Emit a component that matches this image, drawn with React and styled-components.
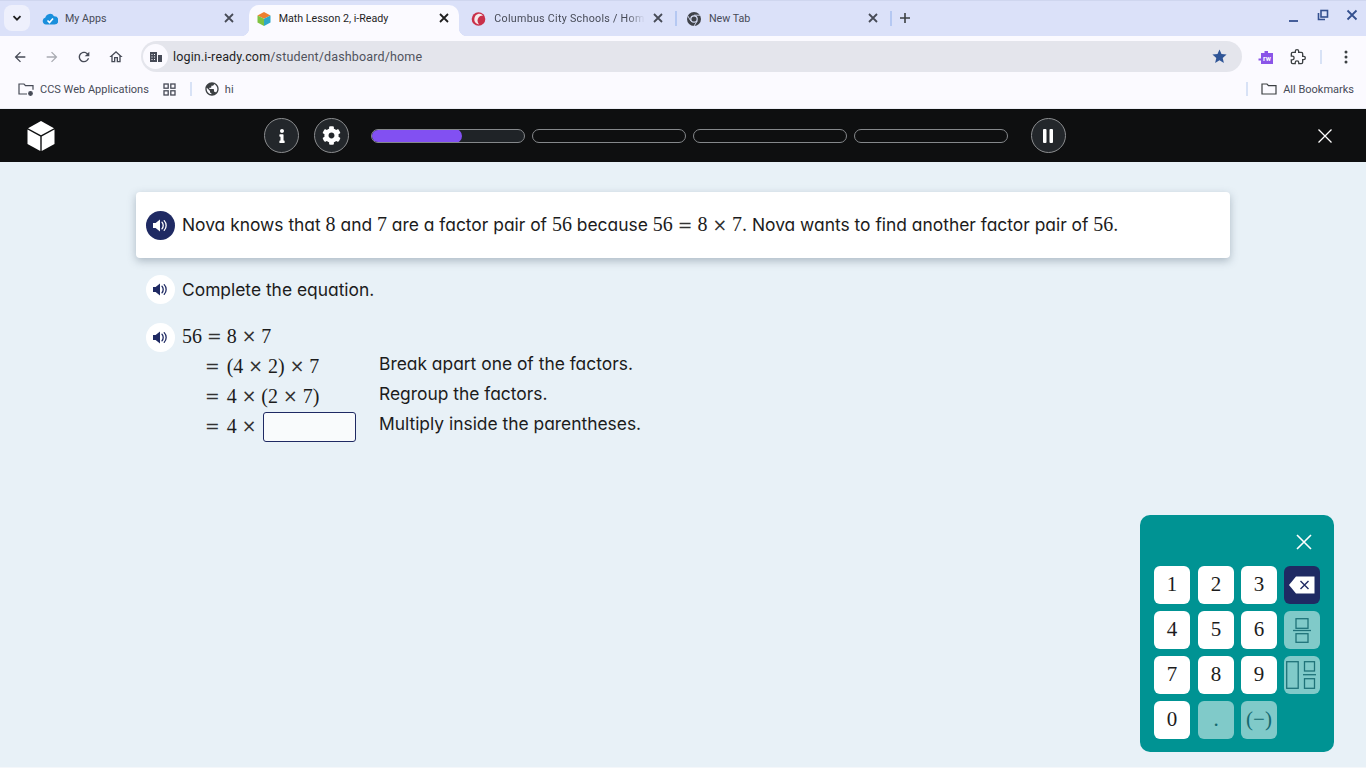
import React from 'react';
import styled, { createGlobalStyle } from 'styled-components';
import { FaCog, FaInfo } from 'react-icons/fa';

const Global = createGlobalStyle`
  html, body { margin: 0; padding: 0; height: 100%; overflow: hidden; }
  body { font-family: "Inter", "Lato", sans-serif; background: #e8f1f7; }
  #root { height: 100%; }
`;

const Page = styled.div`
  position: relative;
  width: 1366px;
  height: 768px;
  display: flex;
  flex-direction: column;
  overflow: hidden;
`;

/* ---- browser chrome ---- */
const TabStrip = styled.div`
  height: 36px;
  flex: none;
  background: #dbe1f9;
  border-top: 1px solid #cfd6ef;
  box-sizing: border-box;
  display: flex;
  align-items: flex-end;
  padding-left: 4px;
`;
const TabSearch = styled.div`
  width: 26px;
  height: 26px;
  margin: 0 4px 5px 0;
  border-radius: 8px;
  background: #eef0fc;
  display: flex;
  align-items: center;
  justify-content: center;
`;
const Tab = styled.div`
  position: relative;
  width: 214.67px;
  height: 31px;
  box-sizing: border-box;
  padding: 0 13.5px 4px 8px;
  display: flex;
  align-items: center;
  gap: 7px;
  font: 10.7px "Roboto", sans-serif;
  color: ${p => (p.$active ? '#1f1f1f' : '#474b57')};
  ${p => p.$active && `
    background: #fbfaff;
    border-radius: 10px 10px 0 0;
    width: 210px;
    margin: 0 4.67px 0 0;
    padding-left: 7px;
    padding-right: 9px;
    &::before, &::after {
      content: '';
      position: absolute;
      bottom: 0;
      width: 8px;
      height: 8px;
    }
    &::before { left: -8px; background: radial-gradient(circle at 0 0, transparent 8px, #fbfaff 8.5px); }
    &::after { right: -8px; background: radial-gradient(circle at 100% 0, transparent 8px, #fbfaff 8.5px); }
  `}
`;
const Favicon = styled.span`
  width: 16px;
  height: 16px;
  flex: none;
  display: flex;
`;
const TabTitle = styled.span`
  flex: 1;
  min-width: 0;
  white-space: nowrap;
  overflow: hidden;
  ${p => p.$fade && `
    letter-spacing: 0.28px;
    -webkit-mask-image: linear-gradient(to right, #000 88%, transparent 100%);
    mask-image: linear-gradient(to right, #000 88%, transparent 100%);
  `}
`;
const TabClose = styled.span`
  width: 12px;
  height: 12px;
  flex: none;
  display: flex;
  margin-top: -2px;
`;
const TabSep = styled.span`
  position: absolute;
  right: 1px;
  top: 6px;
  width: 2px;
  height: 15px;
  background: #b5c8f2;
`;
const NewTab = styled.div`
  width: 14px;
  height: 14px;
  margin: 0 0 11px 5px;
  display: flex;
`;
const WindowButtons = styled.div`
  margin-left: auto;
  display: flex;
  align-items: center;
  gap: 17px;
  padding: 0 8px 13px 0;
`;
const Toolbar = styled.div`
  height: 36px;
  flex: none;
  background: #fbfaff;
  display: flex;
  align-items: center;
  padding: 5px 0 0 12px;
  box-sizing: border-box;
`;
const NavButton = styled.span`
  width: 16px;
  height: 16px;
  flex: none;
  margin-right: 16px;
  display: flex;
`;
const Omnibox = styled.div`
  width: 1101px;
  height: 31px;
  margin-left: 1px;
  border-radius: 16px;
  background: #e4e5ec;
  display: flex;
  align-items: center;
  box-sizing: border-box;
  padding: 0 14px 0 2px;
  flex: none;
`;
const SiteChip = styled.span`
  width: 25px;
  height: 25px;
  margin-right: 5px;
  border-radius: 50%;
  background: #fbfaff;
  display: flex;
  align-items: center;
  justify-content: center;
  flex: none;
`;
const Url = styled.span`
  flex: 1;
  font: 12.5px "Roboto", sans-serif;
  letter-spacing: 0.15px;
  color: #50535d;
  b { font-weight: 400; color: #1f1f1f; }
`;
const ExtArea = styled.div`
  display: flex;
  align-items: center;
  margin-left: 16px;
  flex: 1;
`;
const ExtGap = styled.span`
  width: 16px;
  flex: none;
`;
const ToolSep = styled.span`
  width: 2px;
  height: 14px;
  background: #d8e2f6;
  margin: 0 22px 0 14px;
`;
const Bookmarks = styled.div`
  height: 36px;
  flex: none;
  background: #fbfaff;
  display: flex;
  align-items: center;
  padding: 0 12px 2px 18px;
  box-sizing: border-box;
  font: 11px "Roboto", sans-serif;
  color: #474b57;
`;
const BmItem = styled.span`
  display: flex;
  align-items: center;
  gap: ${p => p.$gap || 6}px;
  white-space: nowrap;
`;
const BmApps = styled.span`
  display: flex;
  margin-left: 14px;
`;
const BmSep = styled.span`
  width: 2px;
  height: 14px;
  background: #d8e2f6;
  margin: ${p => p.$m};
`;
const TopEdge = styled.div`
  height: 1px;
  flex: none;
  background: #eceef5;
`;

/* ---- lesson header ---- */
const LessonBar = styled.header`
  height: 53px;
  flex: none;
  background: #0e0f10;
  display: flex;
  align-items: center;
  padding-left: 27px;
  box-sizing: border-box;
`;
const Logo = styled.span`
  width: 28px;
  height: 32px;
  flex: none;
  display: flex;
  margin-right: 210px;
`;
const RoundButton = styled.span`
  width: 35px;
  height: 35px;
  flex: none;
  margin: ${p => p.$m || 0};
  box-sizing: border-box;
  border-radius: 50%;
  border: 1px solid #8b8d8f;
  background: #23272b;
  color: #fff;
  display: flex;
  align-items: center;
  justify-content: center;
`;
const Progress = styled.div`
  display: flex;
  gap: 7px;
  margin: 0 22.5px 0 22px;
`;
const Segment = styled.div`
  width: 154px;
  height: 14px;
  box-sizing: border-box;
  border: 1px solid #85888b;
  border-radius: 7px;
  background: ${p => (p.$current ? '#1f2327' : '#0e0f10')};
  overflow: hidden;
`;
const SegmentFill = styled.div`
  background: #8250f2;
  border-radius: 7px;
  margin: -1px 0 0 -1px;
  height: 14px;
`;
const ExitButton = styled.span`
  width: 16px;
  height: 16px;
  margin-left: 251px;
  display: flex;
`;

/* ---- lesson body ---- */
const Body = styled.main`
  flex: 1;
  background: #e8f1f7;
  padding: 30px 136px 0;
  border-bottom: 1px solid #f4f7fa;
`;
const QuestionCard = styled.section`
  height: 66px;
  background: #fff;
  border-radius: 4px;
  box-shadow: 0 3px 8px rgba(60, 80, 100, 0.35);
  display: flex;
  align-items: center;
  gap: 7px;
  padding-left: 10px;
`;
const Speaker = styled.span`
  width: 29px;
  height: 29px;
  flex: none;
  border-radius: 50%;
  background: ${p => (p.$filled ? '#1f2a63' : '#fff')};
  color: ${p => (p.$filled ? '#fff' : '#1f2a63')};
  display: flex;
  align-items: center;
  justify-content: center;
`;
const Prose = styled.p`
  margin: 0;
  display: flex;
  align-items: baseline;
  font-family: "Inter", "Lato", sans-serif;
  font-feature-settings: "cv11" 1;
  font-size: 17.4px;
  color: #1c1c1c;
  white-space: pre;
`;
const QuestionText = styled(Prose)`
  margin-top: -2px;
`;
const M = styled.span`
  font-family: "Liberation Serif", serif;
  font-size: 20px;
`;
const Op = styled.span`
  font-family: "DejaVu Sans", sans-serif;
  font-size: 17.5px;
  margin: 0 5px;
  color: #333;
`;
const LeadEquals = styled(Op)`
  margin-right: 7px;
`;
const Instruction = styled.div`
  display: flex;
  align-items: center;
  gap: 7px;
  margin: 17px 0 0 10px;
`;
const Work = styled.div`
  display: flex;
  gap: 7px;
  margin: 19px 0 0 10px;
`;
const Steps = styled.div`
  display: grid;
  grid-template-columns: 197px auto;
  grid-auto-rows: 30px;
  margin-top: -2px;
  align-items: center;
`;
const Eq = styled.div`
  font-family: "Liberation Serif", serif;
  font-size: 20px;
  color: #1c1c1c;
  white-space: pre;
  display: flex;
  align-items: center;
  height: 30px;
  padding-left: ${p => (p.$first ? 0 : 18)}px;
`;
const Note = styled(Prose)`
  margin-top: -5px;
`;
const Blank = styled.span`
  display: block;
  width: 93px;
  height: 30px;
  box-sizing: border-box;
  margin: 1px 0 0 2px;
  border: 1px solid #1f2a63;
  border-radius: 3px;
  background: #f9fbfc;
`;

/* ---- keypad (floats over the lesson) ---- */
const Keypad = styled.aside`
  position: absolute;
  left: 1140px;
  top: 515px;
  width: 194px;
  height: 237px;
  box-sizing: border-box;
  border-radius: 10px;
  background: #009393;
  padding: 51px 14px 0;
`;
const KeypadClose = styled.span`
  position: absolute;
  right: 21px;
  top: 18px;
  width: 18px;
  height: 18px;
  display: flex;
`;
const Keys = styled.div`
  display: grid;
  grid-template-columns: 44px 43px 43px 36px;
  grid-auto-rows: 38px;
  row-gap: 7px;
`;
const Key = styled.span`
  width: 36px;
  border-radius: 6px;
  padding-bottom: ${p => (p.$icon ? 0 : 2)}px;
  box-sizing: border-box;
  background: ${p => (p.$variant === 'dark' ? '#1f2a63' : p.$variant === 'muted' ? '#80cac9' : '#fff')};
  color: ${p => (p.$variant === 'muted' ? '#14696f' : '#1c1c1c')};
  font-family: "Liberation Serif", serif;
  font-size: 21px;
  display: flex;
  align-items: center;
  justify-content: center;
`;

/* ---- icons ---- */
const I = ({ d, c = '#474b57', s = 16, vb = 24 }) => (
  <svg width={s} height={s} viewBox={`0 0 ${vb} ${vb}`} fill={c}><path d={d} /></svg>
);
const Cross = ({ c = '#3c4043', s = 12, w = 1.8 }) => (
  <svg width={s} height={s} viewBox="0 0 12 12" stroke={c} strokeWidth={w} fill="none"><path d="M2 2l8 8M10 2l-8 8" /></svg>
);
const SpeakerGlyph = () => (
  <svg width="15" height="13" viewBox="0 0 15 13" fill="currentColor">
    <path d="M0 4h2.600L7 .5v12L2.600 9H0z" />
    <path d="M9 3.200c1.600 1.600 1.600 5 0 6.600M11.200 1.600c2.600 2.600 2.600 7.200 0 9.800" fill="none" stroke="currentColor" strokeWidth="1.300" strokeLinecap="round" />
  </svg>
);

const FAV = {
  cloud: (
    <svg width="16" height="16" viewBox="0 0 16 16">
      <path d="M4 13.500a3.500 3.500 0 0 1-.6-6.900A4.600 4.600 0 0 1 12 5.300a4 4 0 0 1 .4 8.200z" fill="#1a8fdc" />
      <path d="M5.500 9.500l2 2 3.500-4" stroke="#fff" strokeWidth="1.600" fill="none" />
    </svg>
  ),
  cube: (
    <svg width="16" height="16" viewBox="0 0 16 16">
      <path d="M8 1l6.500 3.400L8 7.800 1.500 4.400z" fill="#ef7f2f" />
      <path d="M1.500 4.400L8 7.800V15l-6.500-3.500z" fill="#7fc241" />
      <path d="M14.500 4.400L8 7.800V15l6.500-3.500z" fill="#2fa8c9" />
    </svg>
  ),
  ccs: (
    <svg width="16" height="16" viewBox="0 0 16 16">
      <circle cx="7.500" cy="8" r="6.800" fill="#c9304a" />
      <path d="M7 3C4 4 3 7 3.500 10 4 12 6 13 8 13.500 6 11 6 8 8 6 9 5 11 4.500 12 5 11 3 9 2.500 7 3z" fill="#f6e9ea" />
    </svg>
  ),
  chrome: (
    <svg width="16" height="16" viewBox="0 0 16 16">
      <circle cx="8" cy="8" r="7" fill="#3f4249" />
      <circle cx="8" cy="8" r="3.800" fill="#dbe1f9" />
      <circle cx="8" cy="8" r="2.600" fill="#3f4249" />
      <path d="M8 4.200h6.400M4.700 9.900L1.600 4.500M11.300 9.900L8 15" stroke="#dbe1f9" strokeWidth=".9" />
    </svg>
  ),
};

const TABS = [
  { fav: 'cloud', title: 'My Apps' },
  { fav: 'cube', title: 'Math Lesson 2, i-Ready', active: true },
  { fav: 'ccs', title: 'Columbus City Schools / Home', fade: true, sep: true },
  { fav: 'chrome', title: 'New Tab', sep: true },
];

const PATHS = {
  back: 'M20 11H7.830l5.590-5.590L12 4l-8 8 8 8 1.410-1.410L7.830 13H20v-2z',
  forward: 'M12 4l-1.410 1.410L16.170 11H4v2h12.170l-5.580 5.590L12 20l8-8z',
  reload: 'M17.650 6.350C16.200 4.900 14.210 4 12 4c-4.420 0-7.990 3.580-7.990 8s3.570 8 7.990 8c3.730 0 6.840-2.550 7.730-6h-2.080c-.82 2.330-3.040 4-5.650 4-3.310 0-6-2.690-6-6s2.690-6 6-6c1.660 0 3.140.69 4.220 1.780L13 11h7V4l-2.350 2.350z',
  home: 'M12 5.690l5 4.500V18h-2v-6H9v6H7v-7.810l5-4.500M12 3L2 12h3v8h6v-6h2v6h6v-8h3L12 3z',
  star: 'M12 17.270L18.180 21l-1.640-7.030L22 9.240l-7.190-.61L12 2 9.190 8.630 2 9.240l5.460 4.730L5.820 21z',
  ext: 'M20.500 11H19V7c0-1.100-.9-2-2-2h-4V3.500C13 2.120 11.880 1 10.500 1S8 2.120 8 3.500V5H4c-1.100 0-1.990.9-1.990 2v3.800H3.500c1.490 0 2.700 1.210 2.700 2.700s-1.210 2.700-2.700 2.700H2V20c0 1.100.9 2 2 2h3.800v-1.500c0-1.490 1.210-2.700 2.700-2.700 1.490 0 2.700 1.210 2.700 2.700V22H17c1.100 0 2-.9 2-2v-4h1.500c1.380 0 2.500-1.120 2.500-2.500S21.880 11 20.500 11z',
  globe: 'M12 2C6.480 2 2 6.480 2 12s4.480 10 10 10 10-4.480 10-10S17.520 2 12 2zm-1 17.930c-3.950-.49-7-3.850-7-7.930 0-.62.080-1.210.21-1.790L9 15v1c0 1.100.9 2 2 2v1.930zm6.900-2.540c-.26-.81-1-1.390-1.900-1.390h-1v-3c0-.55-.45-1-1-1H8v-2h2c.55 0 1-.45 1-1V7h2c1.100 0 2-.9 2-2v-.41c2.930 1.190 5 4.060 5 7.410 0 2.080-.8 3.970-2.100 5.390z',
};

const Times = () => <Op>×</Op>;
const Equals = () => <Op>=</Op>;
const Lead = () => <LeadEquals>=</LeadEquals>;

const KEY_ROWS = [
  ['1', '2', '3', 'back'],
  ['4', '5', '6', 'frac'],
  ['7', '8', '9', 'mixed'],
  ['0', '.', '(−)', null],
];

const FractionIcon = () => (
  <svg width="18" height="25" viewBox="0 0 18 25" fill="none" stroke="#1f7279" strokeWidth="1.300">
    <rect x="3" y=".7" width="12" height="9.600" />
    <path d="M0 12.500h18" />
    <rect x="3" y="15.700" width="12" height="8.600" />
  </svg>
);
const MixedIcon = () => (
  <svg width="32" height="28" viewBox="0 0 32 28" fill="none" stroke="#1f7279" strokeWidth="1.300">
    <rect x=".7" y=".7" width="11.500" height="26.600" />
    <rect x="18.500" y=".7" width="10" height="9.300" />
    <path d="M17 13.700h13" />
    <rect x="18.500" y="17.700" width="10" height="9.600" />
  </svg>
);
const BackspaceIcon = () => (
  <svg width="26" height="18" viewBox="0 0 26 18">
    <path d="M7 0.500h18.500v17H7L0 9z" fill="#fff" />
    <path d="M11.500 5l8 8M19.500 5l-8 8" stroke="#1f2a63" strokeWidth="1.400" />
  </svg>
);

const renderKey = k => {
  if (k === null) return <span key="empty" />;
  if (k === 'back') return <Key key={k} $icon $variant="dark"><BackspaceIcon /></Key>;
  if (k === 'frac') return <Key key={k} $icon $variant="muted"><FractionIcon /></Key>;
  if (k === 'mixed') return <Key key={k} $icon $variant="muted"><MixedIcon /></Key>;
  if (k === '.' || k === '(−)') return <Key key={k} $variant="muted">{k}</Key>;
  return <Key key={k}>{k}</Key>;
};

export default function App() {
  return (
    <Page>
      <Global />
      <TabStrip>
        <TabSearch>
          <svg width="10" height="10" viewBox="0 0 10 10" fill="none" stroke="#1f1f1f" strokeWidth="1.800"><path d="M1.500 3.200L5 6.700l3.500-3.500" /></svg>
        </TabSearch>
        {TABS.map(t => (
          <Tab key={t.title} $active={t.active}>
            <Favicon>{FAV[t.fav]}</Favicon>
            <TabTitle $fade={t.fade}>{t.title}</TabTitle>
            <TabClose><Cross c={t.active ? '#1f1f1f' : '#474b57'} /></TabClose>
            {t.sep && <TabSep />}
          </Tab>
        ))}
        <NewTab>
          <svg width="14" height="14" viewBox="0 0 14 14" stroke="#3c4043" strokeWidth="1.600"><path d="M7 2v10M2 7h10" /></svg>
        </NewTab>
        <WindowButtons>
          <svg width="12" height="12" viewBox="0 0 12 12" stroke="#34508f" strokeWidth="1.800" style={{ marginTop: 4 }}><path d="M1 10h9" /></svg>
          <svg width="12" height="12" viewBox="0 0 12 12" fill="none" stroke="#34508f" strokeWidth="1.600"><rect x="4" y="1.500" width="6.500" height="6.500" /><path d="M1.500 4v6.500H8" /></svg>
          <svg width="12" height="12" viewBox="0 0 12 12" stroke="#34508f" strokeWidth="1.800"><path d="M1.500 1.500l9 9M10.500 1.500l-9 9" /></svg>
        </WindowButtons>
      </TabStrip>

      <Toolbar>
        <NavButton><I d={PATHS.back} /></NavButton>
        <NavButton><I d={PATHS.forward} c="#a9abb2" /></NavButton>
        <NavButton><I d={PATHS.reload} /></NavButton>
        <NavButton><I d={PATHS.home} /></NavButton>
        <Omnibox>
          <SiteChip>
            <svg width="12" height="12" viewBox="0 0 12 12" fill="#474b57"><path d="M0 1h7v10H0z" /><path d="M8 4h4v7H8z" /><path d="M1.500 3h1v1h-1zM4 3h1v1H4zM1.500 5.500h1v1h-1zM4 5.500h1v1H4zM1.500 8h1v1h-1zM4 8h1v1H4z" fill="#fbfaff" /></svg>
          </SiteChip>
          <Url><b>login.i-ready.com</b>/student/dashboard/home</Url>
          <I d={PATHS.star} c="#2f5597" s={17} />
        </Omnibox>
        <ExtArea>
          <svg width="16" height="16" viewBox="0 0 16 16">
            <path d="M3 4h3.500V2h3.500v2H15v11H3v-3.500H0.500v-2H3z" fill="#8a55e8" />
            <text x="9" y="11.500" fontFamily="Roboto" fontSize="7" fontWeight="700" fill="#fff" textAnchor="middle">rw</text>
          </svg>
          <ExtGap />
          <svg width="16" height="16" viewBox="0 0 24 24" fill="none" stroke="#3c4043" strokeWidth="2"><path d={PATHS.ext} /></svg>
          <ToolSep />
          <svg width="4" height="14" viewBox="0 0 4 14" fill="#3c4043"><circle cx="2" cy="2" r="1.500" /><circle cx="2" cy="7" r="1.500" /><circle cx="2" cy="12" r="1.500" /></svg>
        </ExtArea>
      </Toolbar>

      <Bookmarks>
        <BmItem>
          <svg width="16" height="16" viewBox="0 0 16 16" fill="none" stroke="#474b57" strokeWidth="1.200"><path d="M9 13H1V3h5l1.500 1.700H15v4" /><circle cx="12.500" cy="12.500" r="1.800" fill="#474b57" /></svg>
          CCS Web Applications
        </BmItem>
        <BmApps>
          <svg width="13" height="13" viewBox="0 0 13 13" fill="none" stroke="#474b57" strokeWidth="1.300"><rect x="1" y="1" width="4.200" height="4.200" /><rect x="7.800" y="1" width="4.200" height="4.200" /><rect x="1" y="7.800" width="4.200" height="4.200" /><rect x="7.800" y="7.800" width="4.200" height="4.200" /></svg>
        </BmApps>
        <BmSep $m="0 12px 0 14px" />
        <BmItem $gap={5}>
          <I d={PATHS.globe} s={16} c="#3c4043" />
          hi
        </BmItem>
        <BmSep $m="0 13px 0 auto" />
        <BmItem>
          <svg width="16" height="16" viewBox="0 0 16 16" fill="none" stroke="#3c4043" strokeWidth="1.200"><path d="M1 3h5l1.500 1.700H15V13H1z" /></svg>
          All Bookmarks
        </BmItem>
      </Bookmarks>
      <TopEdge />

      <LessonBar>
        <Logo>
          <svg width="28" height="32" viewBox="0 0 28 32" fill="#fff">
            <path d="M14 1l13 7.200L14 15.300 1 8.200z" />
            <path d="M.5 9.500L13.300 16.500V31L.5 24z" />
            <path d="M27.500 9.500L14.700 16.500V31L27.500 24z" />
          </svg>
        </Logo>
        <RoundButton $m="0 15px 0 -1px"><FaInfo size={14} /></RoundButton>
        <RoundButton><FaCog size={19} /></RoundButton>
        <Progress>
          <Segment $current><SegmentFill style={{ width: `${(92 / 154) * 100}%` }} /></Segment>
          <Segment />
          <Segment />
          <Segment />
        </Progress>
        <RoundButton>
          <svg width="10" height="14" viewBox="0 0 10 14" fill="#fff"><rect x="0" y="0" width="3.500" height="14" rx="1" /><rect x="6.500" y="0" width="3.500" height="14" rx="1" /></svg>
        </RoundButton>
        <ExitButton>
          <svg width="16" height="16" viewBox="0 0 16 16" stroke="#fff" strokeWidth="1.300"><path d="M1.500 1.500l13 13M14.500 1.500l-13 13" /></svg>
        </ExitButton>
      </LessonBar>

      <Body>
        <QuestionCard>
          <Speaker $filled><SpeakerGlyph /></Speaker>
          <QuestionText>
            Nova knows that <M>8</M> and <M>7</M> are a factor pair of <M>56</M> because <M>56</M><Equals /><M>8</M><Times /><M>7</M>. Nova wants to find another factor pair of <M>56</M>.
          </QuestionText>
        </QuestionCard>
        <Instruction>
          <Speaker><SpeakerGlyph /></Speaker>
          <Prose>Complete the equation.</Prose>
        </Instruction>
        <Work>
          <Speaker><SpeakerGlyph /></Speaker>
          <Steps>
            <Eq $first>56<Equals />8<Times />7</Eq>
            <span />
            <Eq><Lead />(4<Times />2)<Times />7</Eq>
            <Note>Break apart one of the factors.</Note>
            <Eq><Lead />4<Times />(2<Times />7)</Eq>
            <Note>Regroup the factors.</Note>
            <Eq><Lead />4<Times /><Blank /></Eq>
            <Note>Multiply inside the parentheses.</Note>
          </Steps>
        </Work>
      </Body>

      <Keypad>
        <KeypadClose>
          <svg width="18" height="18" viewBox="0 0 18 18" stroke="#fff" strokeWidth="1.600"><path d="M2 2l14 14M16 2L2 16" /></svg>
        </KeypadClose>
        <Keys>{KEY_ROWS.flat().map(renderKey)}</Keys>
      </Keypad>
    </Page>
  );
}
